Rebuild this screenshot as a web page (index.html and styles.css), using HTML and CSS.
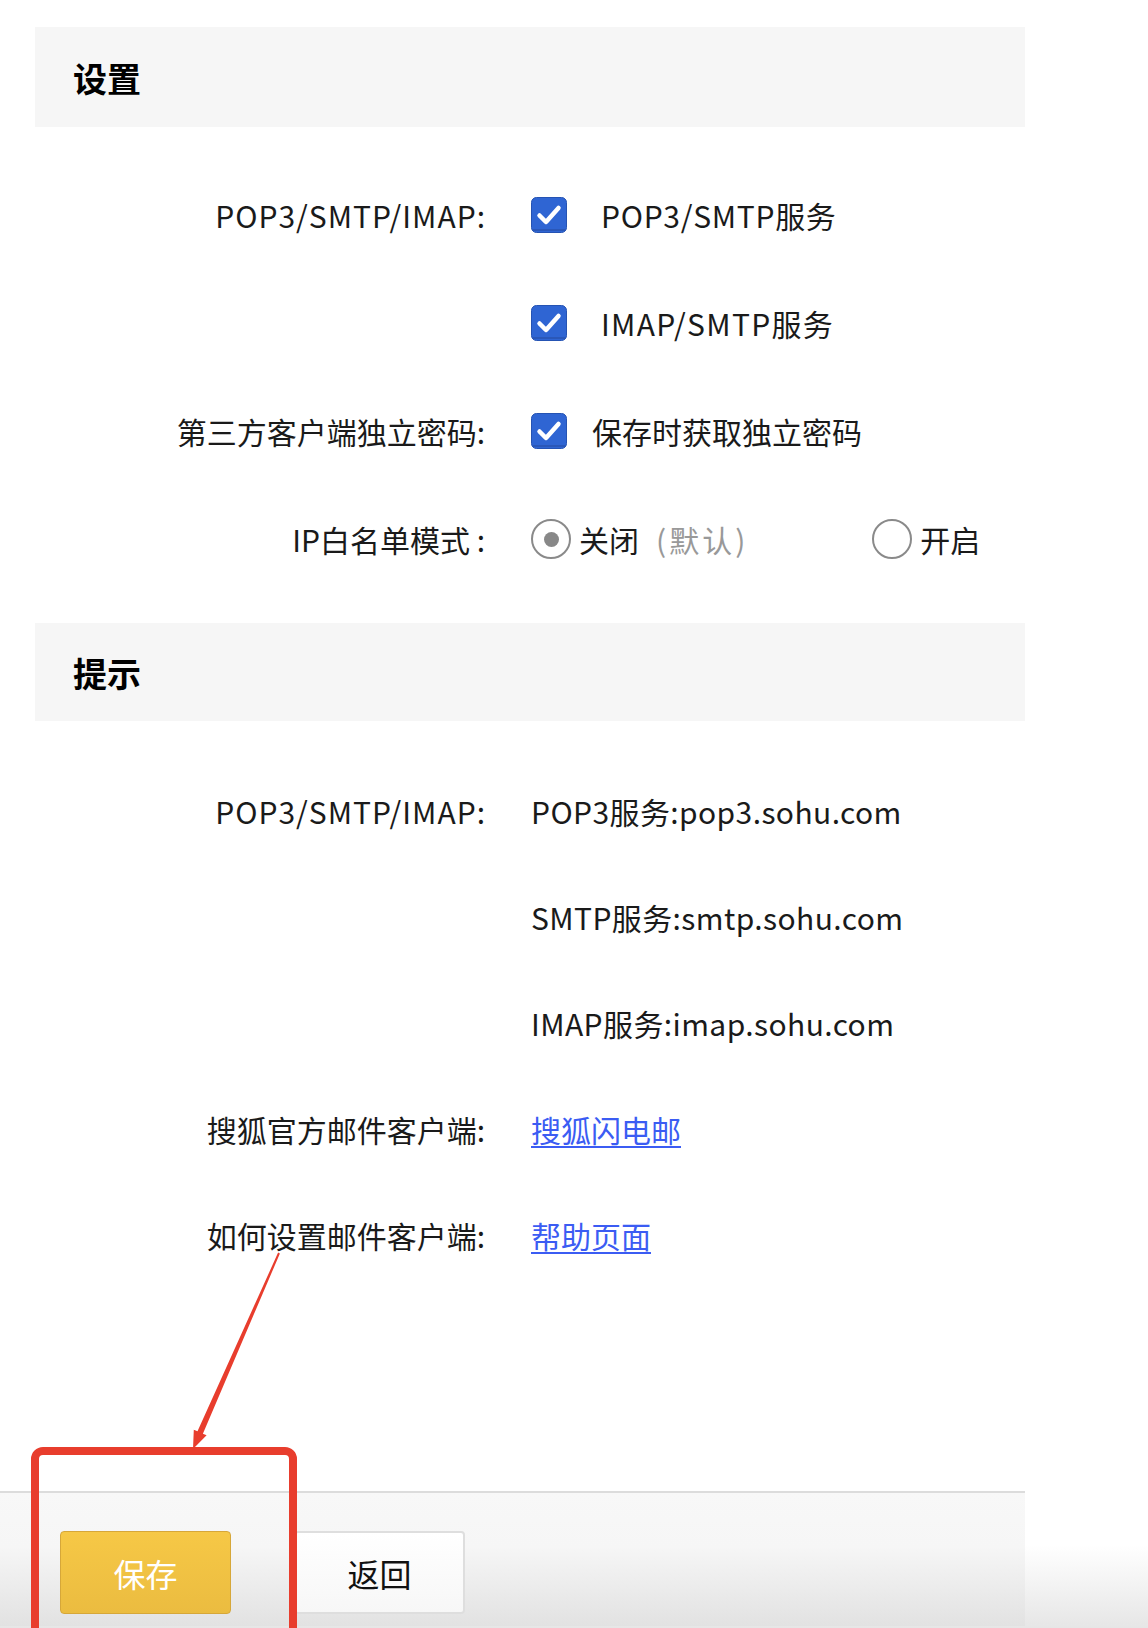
FILE: index.html
```html
<!DOCTYPE html>
<html lang="zh-CN">
<head>
    <meta charset="UTF-8">
    <title>设置</title>
    <link rel="stylesheet" href="styles.css">
</head>
<body>
    <div class="page">
        <!-- 设置 -->
        <div class="section-title">设置</div>
        <div class="form settings">
            <div class="row">
                <div class="label en">POP3/SMTP/IMAP:</div>
                <div class="value">
                    <svg class="check" viewBox="0 0 36 36"><rect x="0.5" y="0.5" width="35" height="35" rx="5" fill="#2f65d3" stroke="#2553b3"/><rect x="1.5" y="32" width="33" height="2" fill="#2a57b8"/><path d="M8.5 18.5 L15 25 L27.5 11" fill="none" stroke="#fff" stroke-width="4.5" stroke-linecap="round" stroke-linejoin="round"/></svg>
                    <span class="opt wide">POP3/SMTP服务</span>
                </div>
            </div>
            <div class="row">
                <div class="label"></div>
                <div class="value">
                    <svg class="check" viewBox="0 0 36 36"><rect x="0.5" y="0.5" width="35" height="35" rx="5" fill="#2f65d3" stroke="#2553b3"/><rect x="1.5" y="32" width="33" height="2" fill="#2a57b8"/><path d="M8.5 18.5 L15 25 L27.5 11" fill="none" stroke="#fff" stroke-width="4.5" stroke-linecap="round" stroke-linejoin="round"/></svg>
                    <span class="opt wide imap">IMAP/SMTP服务</span>
                </div>
            </div>
            <div class="row">
                <div class="label">第三方客户端独立密码:</div>
                <div class="value">
                    <svg class="check" viewBox="0 0 36 36"><rect x="0.5" y="0.5" width="35" height="35" rx="5" fill="#2f65d3" stroke="#2553b3"/><rect x="1.5" y="32" width="33" height="2" fill="#2a57b8"/><path d="M8.5 18.5 L15 25 L27.5 11" fill="none" stroke="#fff" stroke-width="4.5" stroke-linecap="round" stroke-linejoin="round"/></svg>
                    <span class="opt">保存时获取独立密码</span>
                </div>
            </div>
            <div class="row">
                <div class="label">IP白名单模式 :</div>
                <div class="value">
                    <span class="radio checked"></span>
                    <span class="radio-text">关闭</span>
                    <span class="hint">(默认)</span>
                    <span class="radio second"></span>
                    <span class="radio-text">开启</span>
                </div>
            </div>
        </div>

        <!-- 提示 -->
        <div class="section-title tips-title">提示</div>
        <div class="form tips">
            <div class="row">
                <div class="label en">POP3/SMTP/IMAP:</div>
                <div class="value">POP3服务:pop3.sohu.com</div>
            </div>
            <div class="row">
                <div class="label"></div>
                <div class="value">SMTP服务:smtp.sohu.com</div>
            </div>
            <div class="row">
                <div class="label"></div>
                <div class="value">IMAP服务:imap.sohu.com</div>
            </div>
            <div class="row">
                <div class="label">搜狐官方邮件客户端:</div>
                <div class="value"><a href="#">搜狐闪电邮</a></div>
            </div>
            <div class="row">
                <div class="label">如何设置邮件客户端:</div>
                <div class="value"><a href="#">帮助页面</a></div>
            </div>
        </div>

        <div class="footer">
            <button class="btn btn-save">保存</button>
            <button class="btn btn-back">返回</button>
        </div>
    </div>

    <!-- annotation -->
    <svg class="mark" width="1148" height="1628" viewBox="0 0 1148 1628">
        <polygon points="278.1,1252.6 279.9,1253.4 202.9,1433.7 206.6,1435.3 193,1449 193.8,1429.7 197.5,1431.3" fill="#e83d2d"/>
        <rect x="35" y="1451" width="258" height="300" rx="8" fill="none" stroke="#e83d2d" stroke-width="8"/>
    </svg>
</body>
</html>
```

FILE: styles.css
```css
body {
    margin: 0;
    height: 1628px;
    overflow: hidden;
    position: relative;
    font-family: "Noto Sans CJK SC", sans-serif;
    color: #1a1a1a;
    background: linear-gradient(to bottom, #fff 1545px, #e6e6e6 1628px);
}
.page {
    width: 1025px;
    padding-top: 27px;
}
.section-title {
    margin-left: 35px;
    height: 100px;
    padding-left: 38px;
    background: #f6f6f6;
    display: flex;
    align-items: center;
    font-size: 34px;
    font-weight: bold;
    color: #000;
}
.tips-title {
    margin-top: 30px;
    height: 98px;
}
.form.settings {
    margin-top: 34px;
}
.form.tips {
    margin-top: 37px;
}
.row {
    display: grid;
    grid-template-columns: 485px 1fr;
    column-gap: 46px;
    align-items: center;
    height: 108px;
    font-size: 30px;
}
.tips .row {
    height: 106px;
}
.label {
    text-align: right;
    white-space: nowrap;
}
.label.en {
    letter-spacing: 1px;
    margin-right: -1px;
}
.value {
    display: flex;
    align-items: center;
    white-space: nowrap;
    letter-spacing: 0.4px;
}
.check {
    width: 36px;
    height: 36px;
}
.opt {
    margin-left: 25px;
    letter-spacing: 0;
}
.opt.wide {
    margin-left: 34px;
    letter-spacing: 0.7px;
}
.opt.imap {
    letter-spacing: 1.3px;
}
.radio {
    width: 36px;
    height: 36px;
    border: 2px solid #8a8a8a;
    border-radius: 50%;
    display: inline-flex;
    align-items: center;
    justify-content: center;
}
.radio.checked::after {
    content: "";
    width: 15px;
    height: 15px;
    border-radius: 50%;
    background: #888;
}
.radio.second {
    margin-left: 124px;
}
.radio-text {
    margin-left: 8px;
    letter-spacing: 0;
}
.hint {
    margin-left: 17px;
    color: #999;
    letter-spacing: 3px;
}
a {
    color: #3b5cf3;
    letter-spacing: 0;
    text-decoration-thickness: 2px;
    text-underline-offset: 4px;
}
.footer {
    margin-top: 203px;
    height: 135px;
    box-sizing: border-box;
    border-top: 2px solid #dcdcdc;
    padding: 38px 0 0 60px;
    display: flex;
    gap: 63px;
    align-items: flex-start;
    background: linear-gradient(to bottom, #f8f8f8 0, #f6f6f6 40%, #e2e2e2 100%);
}
.btn {
    width: 171px;
    height: 83px;
    border-radius: 4px;
    font-family: "Noto Sans CJK SC", sans-serif;
    font-size: 32px;
    cursor: pointer;
}
.btn-save {
    background: linear-gradient(to bottom, #f6c846, #ebbc40);
    border: 1px solid #d6a739;
    color: #fff;
}
.btn-back {
    background: linear-gradient(to bottom, #fff, #f7f7f7);
    border: 2px solid #dedede;
    color: #111;
}
.mark {
    position: absolute;
    top: 0;
    left: 0;
    pointer-events: none;
}
```
